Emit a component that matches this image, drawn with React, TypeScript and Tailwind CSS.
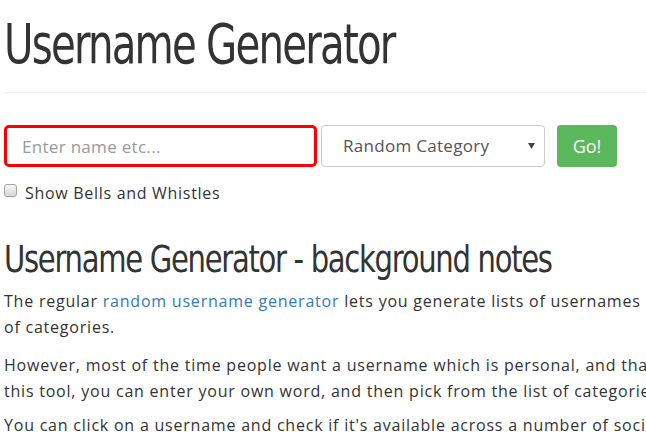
import React from "react";

const PAGE_COPY = {
  Title: "Username Generator",
  InputPlaceholder: "Enter name etc...",
  GoLabel: "Go!",
  ExtrasLabel: "Show Bells and Whistles",
  NotesTitle: "Username Generator - background notes",
};

const CATEGORIES = ["Random Category", "Animals", "Fantasy", "Gaming", "Sports"];

const App = () => {
  return (
    <div className="h-screen w-full overflow-hidden bg-white font-['Open_Sans',sans-serif] text-[#333]">
      <div className="w-[1140px] pl-[4px]">
        <h1 className="mt-[16px] origin-left scale-x-80 font-['DejaVu_Sans_Condensed','DejaVu_Sans',sans-serif] text-[56px] leading-none tracking-[-0.04em] text-[#333]">
          {PAGE_COPY.Title}
        </h1>
        <hr className="mt-[20px] border-t border-[#eee]" />

        <div className="mt-[32px] flex flex-row items-center">
          <input
            type="text"
            placeholder={PAGE_COPY.InputPlaceholder}
            className="h-[42px] w-[313px] rounded-[5px] border-[3px] border-[#ff0000] pl-[15px] text-[17px] tracking-[0.3px] text-[#555] outline-none placeholder:text-[#999]"
          />
          <div className="relative ml-[4px]">
            <select
              className="h-[42px] w-[224px] appearance-none rounded-[4px] border border-[#ccc] bg-white pl-[21px] text-[17px] tracking-[0.3px] text-[#555] outline-none"
              defaultValue={CATEGORIES[0]}
            >
              {CATEGORIES.map((c) => (
                <option key={c}>{c}</option>
              ))}
            </select>
            <svg
              className="pointer-events-none absolute right-[10px] top-[18px]"
              width="7"
              height="6"
              viewBox="0 0 7 6"
            >
              <path d="M0 0 H7 L3.5 6 Z" fill="#444" />
            </svg>
          </div>
          <button className="ml-[12px] h-[42px] w-[60px] rounded-[4px] bg-[#5cb85c] text-[18px] text-white">
            {PAGE_COPY.GoLabel}
          </button>
        </div>

        <label className="mt-[14px] flex flex-row items-start">
          <input
            type="checkbox"
            className="mt-[3px] h-[13px] w-[13px] appearance-none rounded-[3px] border border-[#a5a5a5] bg-linear-to-b from-[#f6f6f6] to-[#d6d6d6]"
          />
          <span className="ml-[8px] text-[16px] leading-[24px] tracking-[0.7px]">{PAGE_COPY.ExtrasLabel}</span>
        </label>

        <h2 className="mt-[35px] origin-left scale-x-[0.85] font-['DejaVu_Sans_Condensed','DejaVu_Sans',sans-serif] text-[38px] leading-none tracking-[-0.04em] text-[#333]">
          {PAGE_COPY.NotesTitle}
        </h2>

        <div className="text-[16px] leading-[25.6px] tracking-[0.78px]">
          <p className="mt-[11px] mb-[13px]">
            The regular{" "}
            <a href="#" className="text-[#337ab7]">
              random username generator
            </a>{" "}
            lets you generate lists of usernames randomly from a large number
            <br />
            of categories.
          </p>
          <p className="mb-[9px]">
            However, most of the time people want a username which is personal, and that reflects their interests. With
            <br />
            this tool, you can enter your own word, and then pick from the list of categories to get suggestions.
          </p>
          <p className="mb-[9px]">
            You can click on a username and check if it's available across a number of social networks.
          </p>
        </div>
      </div>
    </div>
  );
};

export default App;
